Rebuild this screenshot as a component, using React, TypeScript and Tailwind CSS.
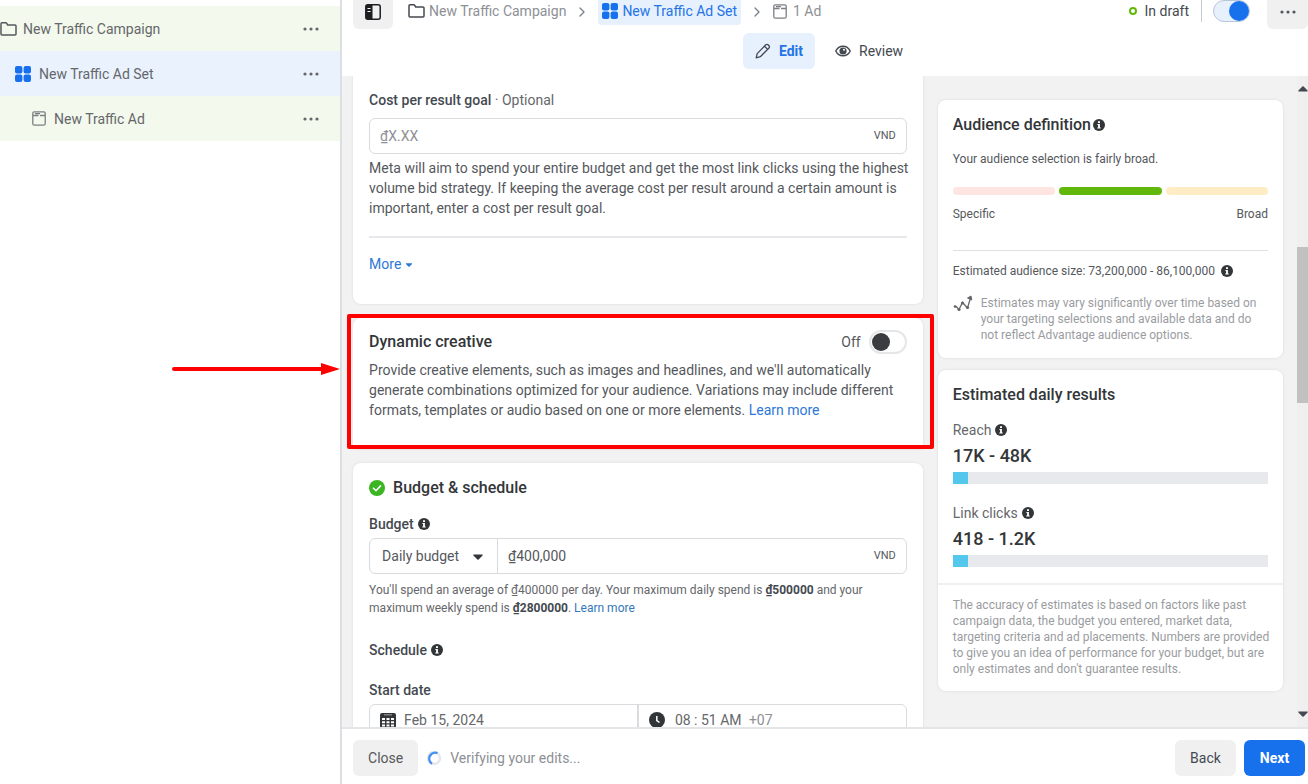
import { useState } from 'react';
import type { ReactNode } from 'react';
import { ChevronRight } from 'lucide-react';

interface IconProps {
  className?: string;
}

function InfoIcon({ className = '' }: IconProps) {
  return (
    <svg viewBox="0 0 12 12" className={`h-3 w-3 shrink-0 ${className}`} aria-hidden="true">
      <circle cx="6" cy="6" r="6" fill="#333638" />
      <path d="M5 2.2h2v1.7H5zM4.4 5h2.5v3.5h.8v1.1H4.3V8.500h.8V6.100h-.7z" fill="#fff" />
    </svg>
  );
}

function FolderIcon({ className = '' }: IconProps) {
  return (
    <svg viewBox="0 0 17 16" className={`h-4 w-[17px] shrink-0 ${className}`} fill="none" stroke="currentColor" strokeWidth="1.5" strokeLinejoin="round" aria-hidden="true">
      <path d="M1 2.8c0-.6.4-1 1-1h3.800c.4 0 .7.200.9.500l1 1.700H15c.6 0 1 .4 1 1V13c0 .6-.4 1-1 1H2c-.6 0-1-.4-1-1z" />
    </svg>
  );
}

function GridIcon() {
  return (
    <svg viewBox="0 0 16 16" className="h-4 w-4 shrink-0" fill="#1771ed" aria-hidden="true">
      <rect x="0" y="0" width="7.400" height="7.400" rx="2" />
      <rect x="8.600" y="0" width="7.400" height="7.400" rx="2" />
      <rect x="0" y="8.600" width="7.400" height="7.400" rx="2" />
      <rect x="8.600" y="8.600" width="7.400" height="7.400" rx="2" />
    </svg>
  );
}

function AdIcon({ className = '' }: IconProps) {
  return (
    <svg viewBox="0 0 14 15" className={`h-[15px] w-3.5 shrink-0 ${className}`} fill="none" stroke="currentColor" strokeWidth="1.3" aria-hidden="true">
      <rect x="0.8" y="0.8" width="12.400" height="13.400" rx="1.500" />
      <path d="M1 4.500h5.500M8 4.500h5M3 2.600h5" />
    </svg>
  );
}

function PanelIcon() {
  return (
    <svg viewBox="0 0 16 16" className="h-4 w-4" aria-hidden="true">
      <rect x="0.8" y="0.8" width="14.400" height="14.400" rx="2" fill="none" stroke="#1c1e21" strokeWidth="1.500" />
      <path d="M1 1h6.500v14H1z" fill="#1c1e21" />
      <path d="M2.500 4.500h3M2.500 7.500h3" stroke="#fff" strokeWidth="1" />
    </svg>
  );
}

function PencilIcon() {
  return (
    <svg viewBox="0 0 16 16" className="h-4 w-4" fill="none" stroke="#444950" strokeWidth="1.300" strokeLinejoin="round" aria-hidden="true">
      <path d="M1.200 14.800l1-4.200 8.600-8.800c.6-.6 1.600-.6 2.200 0l1 1c.6.600.6 1.600 0 2.200l-8.700 8.700zM9.500 3.200l3.200 3.200" />
    </svg>
  );
}

function EyeIcon() {
  return (
    <svg viewBox="0 0 16 12" className="h-3 w-4" aria-hidden="true">
      <path d="M.8 6C2.300 3 4.900 1.200 8 1.200S13.700 3 15.200 6C13.700 9 11.100 10.800 8 10.800S2.300 9 .8 6z" fill="none" stroke="#444950" strokeWidth="1.500" />
      <circle cx="8" cy="6" r="3.600" fill="#444950" />
      <circle cx="9" cy="4.800" r="1" fill="#fff" />
    </svg>
  );
}

function DotsIcon({ className = '' }: IconProps) {
  return (
    <svg viewBox="0 0 16 4" className={`h-1 w-4 ${className}`} fill="currentColor" aria-hidden="true">
      <circle cx="2" cy="2" r="1.600" />
      <circle cx="8" cy="2" r="1.600" />
      <circle cx="14" cy="2" r="1.600" />
    </svg>
  );
}

function CaretIcon({ className = '' }: IconProps) {
  return (
    <svg viewBox="0 0 10 6" className={className} fill="currentColor" aria-hidden="true">
      <path d="M.8.500h8.400c.5 0 .7.500.4.900L5.600 5.500c-.3.400-.9.400-1.200 0L.4 1.400C.1 1 .3.500.8.500z" />
    </svg>
  );
}

function CalendarIcon() {
  return (
    <svg viewBox="0 0 16 16" className="h-4 w-4 shrink-0" fill="#333638" aria-hidden="true">
      <path d="M2 1h12a2 2 0 0 1 2 2v11a2 2 0 0 1-2 2H2a2 2 0 0 1-2-2V3a2 2 0 0 1 2-2z" />
      <path d="M2 6h3v2H2zM6.500 6h3v2h-3zM11 6h3v2h-3zM2 9.200h3v2H2zM6.500 9.200h3v2h-3zM11 9.200h3v2h-3zM2 12.500h3v2H2zM6.500 12.500h3v2h-3zM11 12.500h3v2h-3z" fill="#fff" />
      <path d="M4 2.800h8" stroke="#a0a2a4" />
    </svg>
  );
}

function ClockIcon() {
  return (
    <svg viewBox="0 0 16 16" className="h-4 w-4 shrink-0" aria-hidden="true">
      <circle cx="8" cy="8" r="8" fill="#333638" />
      <path d="M7.800 4v4.500l2.700 2" fill="none" stroke="#fff" strokeWidth="1.500" />
    </svg>
  );
}

function TrendIcon() {
  return (
    <svg viewBox="0 0 20 17" className="h-[17px] w-5 shrink-0" fill="none" stroke="#65676b" aria-hidden="true">
      <path d="M1 11.500h2l3 3 3.500-7 5 5.500L17.500 3" strokeWidth="1.300" />
      <path d="M14.500 3l3.500-2 .8 4z" fill="#65676b" />
      <g fill="#65676b" stroke="none">
        <circle cx="2" cy="11.500" r="1.300" />
        <circle cx="6" cy="14.500" r="1.600" />
        <circle cx="9.500" cy="8" r="1.600" />
        <circle cx="14.500" cy="12.500" r="1.600" />
      </g>
    </svg>
  );
}

const treeItems = [
  { name: 'New Traffic Campaign', icon: <FolderIcon className="text-[#55585c]" />, row: 'bg-[#f3f9ec] gap-1.5' },
  { name: 'New Traffic Ad Set', icon: <GridIcon />, row: 'bg-[#eaf2fe] pl-[15px] gap-2' },
  { name: 'New Traffic Ad', icon: <AdIcon className="text-[#7c7f83]" />, row: 'bg-[#f3f9ec] pl-8 gap-2' },
];

const estimates = [
  { label: 'Reach', value: '17K - 48K', percent: 5 },
  { label: 'Link clicks', value: '418 - 1.2K', percent: 5 },
];

function Sidebar() {
  return (
    <aside className="relative w-[26%] shrink-0 bg-white pt-1.5">
      <ul>
        {treeItems.map((item) => (
          <li key={item.name} className={`flex h-[45px] items-center pr-[21px] ${item.row}`}>
            {item.icon}
            <span className="flex-1 text-sm text-[#65676b]">{item.name}</span>
            <button type="button" aria-label={`Options for ${item.name}`} className="text-[#65676b]">
              <DotsIcon />
            </button>
          </li>
        ))}
      </ul>
      {/* callout arrow */}
      <svg viewBox="0 0 168 12" className="absolute top-[363px] right-0 h-3 w-[168px]" aria-hidden="true">
        <path d="M2 6h148" stroke="#fe0000" strokeWidth="4" strokeLinecap="round" />
        <path d="M149 0l19 6-19 6z" fill="#fe0000" />
      </svg>
    </aside>
  );
}

function Header() {
  const [active, setActive] = useState(true);

  return (
    <header className="h-[76px] shrink-0 bg-white">
      <div className="flex h-[29px] items-start pl-[11px]">
        <button type="button" aria-label="Toggle panel" className="flex h-[29px] w-10 justify-center rounded-b-md bg-[#f0f0f0] pt-1">
          <PanelIcon />
        </button>
        <nav className="flex items-start text-sm text-[#8d9095]">
          <a href="#campaign" className="ml-[15px] flex h-[22px] items-center gap-1">
            <FolderIcon className="text-[#444950]" />
            New Traffic Campaign
          </a>
          <ChevronRight className="mx-2 mt-1 h-4 w-4 text-[#7c828a]" />
          <a href="#adset" className="flex h-[25px] items-center gap-1 rounded-b-sm bg-[#e7f0fd] px-1 pb-[3px] text-[#2374e8]">
            <GridIcon />
            New Traffic Ad Set
          </a>
          <ChevronRight className="mx-2 mt-1 h-4 w-4 text-[#7c828a]" />
          <a href="#ad" className="flex h-[22px] items-center gap-1.5">
            <AdIcon className="text-[#7c7f83]" />
            1 Ad
          </a>
        </nav>
        <div className="ml-auto flex items-start">
          <span className="flex h-[22px] items-center gap-2 border-r border-[#c8cacd] pr-3 text-sm text-[#444950]">
            <span className="h-2 w-2 rounded-full border-2 border-[#62b80a]" />
            In draft
          </span>
          <input
            type="checkbox"
            aria-label="Ad set status"
            checked={active}
            onChange={(e) => setActive(e.target.checked)}
            className="ml-[11px] h-[22px] w-[37px] appearance-none rounded-full border border-[#b9c6d8] bg-[#e7f0fd] before:block before:h-5 before:w-5 before:rounded-full before:bg-[#1771ed] checked:before:ml-[15px]"
          />
          <button type="button" aria-label="More options" className="ml-[17px] flex h-[29px] w-[41px] justify-center rounded-b-md bg-[#f0f0f0] pt-2.5 text-[#55585c]">
            <DotsIcon className="w-3.5" />
          </button>
        </div>
      </div>
      <div className="mt-1 flex justify-center gap-2 pl-2">
        <button type="button" className="flex h-9 items-center gap-2 rounded-md bg-[#e7f0fd] px-3 text-sm font-bold text-[#2374e8]">
          <PencilIcon />
          Edit
        </button>
        <button type="button" className="flex h-9 items-center gap-2 px-3 text-sm text-[#444950]">
          <EyeIcon />
          Review
        </button>
      </div>
    </header>
  );
}

function Card({ className = '', children }: { className?: string; children: ReactNode }) {
  return <section className={`bg-white shadow-[0_0_3px_rgba(0,0,0,0.1)] ${className}`}>{children}</section>;
}

function CostGoalCard() {
  return (
    <Card className="rounded-b-lg px-4 pt-3.5 pb-[30px]">
      <label htmlFor="cost-goal" className="block text-sm leading-5 font-medium text-[#444950]">
        Cost per result goal <span className="font-normal text-[#65676b]">· Optional</span>
      </label>
      <div className="mt-2 flex h-9 items-center rounded-md border border-[#d9dbde] px-2.5">
        <input id="cost-goal" placeholder="₫X.XX" className="min-w-0 flex-1 text-sm outline-none placeholder:text-[#8d9095]" />
        <span className="text-[11px] text-[#55585c]">VND</span>
      </div>
      <p className="-mr-3 mt-1 text-sm leading-5 text-[#55585c]">
        Meta will aim to spend your entire budget and get the most link clicks using the highest volume bid strategy. If
        keeping the average cost per result around a certain amount is important, enter a cost per result goal.
      </p>
      <hr className="mt-[18px] border-t-2 border-[#e6e8eb]" />
      <button type="button" className="mt-4 flex items-center gap-1 text-sm leading-5 text-[#2d78d6]">
        More
        <CaretIcon className="mt-0.5 h-1 w-2" />
      </button>
    </Card>
  );
}

function DynamicCreativeCard() {
  const [enabled, setEnabled] = useState(false);

  return (
    <div className="relative">
      <Card className="rounded-t-lg px-4 pt-3.5 pb-[29px]">
        <div className="flex h-5 items-center">
          <h2 className="flex-1 text-base leading-5 font-medium text-[#333638]">Dynamic creative</h2>
          <label htmlFor="dynamic-creative" className="text-sm text-[#55585c]">
            {enabled ? 'On' : 'Off'}
          </label>
          <input
            id="dynamic-creative"
            type="checkbox"
            checked={enabled}
            onChange={(e) => setEnabled(e.target.checked)}
            className="ml-2 h-6 w-[38px] appearance-none rounded-full border-2 border-[#e4e6e8] bg-white p-px before:block before:h-[18px] before:w-[18px] before:rounded-full before:bg-[#3a3c3f] checked:before:ml-3.5"
          />
        </div>
        <p className="mt-2 text-sm leading-5 text-[#55585c]">
          Provide creative elements, such as images and headlines, and we'll automatically generate combinations optimized
          for your audience. Variations may include different formats, templates or audio based on one or more elements.{' '}
          <a href="#dynamic-help" className="text-[#2d78d6]">Learn more</a>
        </p>
      </Card>
      {/* highlight frame */}
      <div className="pointer-events-none absolute -top-1 -right-[11px] bottom-0 -left-1.5 rounded-xs border-4 border-[#fe0000]" />
    </div>
  );
}

function BudgetCard() {
  return (
    <Card className="rounded-t-lg px-4 pt-[15px] pb-4">
      <h2 className="flex items-center gap-2 text-base leading-5 font-medium text-[#333638]">
        <svg viewBox="0 0 16 16" className="h-4 w-4" aria-hidden="true">
          <circle cx="8" cy="8" r="8" fill="#3cb523" />
          <path d="M4.500 8.200l2.500 2.500 4.500-4.800" fill="none" stroke="#fff" strokeWidth="1.600" strokeLinecap="round" />
        </svg>
        Budget &amp; schedule
      </h2>
      <label htmlFor="budget-amount" className="mt-4 flex items-center gap-1 text-sm leading-5 font-medium text-[#444950]">
        Budget
        <InfoIcon />
      </label>
      <div className="mt-1 flex h-9 items-center rounded-md border border-[#d9dbde]">
        <div className="relative h-full w-32 shrink-0 border-r border-[#d9dbde]">
          <select aria-label="Budget type" className="h-full w-full appearance-none pl-3 text-sm text-[#55585c] outline-none">
            <option>Daily budget</option>
            <option>Lifetime budget</option>
          </select>
          <CaretIcon className="pointer-events-none absolute top-[15px] right-3.5 h-1.5 w-2.5 text-[#333638]" />
        </div>
        <input id="budget-amount" defaultValue="₫400,000" className="min-w-0 flex-1 pl-2.5 text-sm text-[#55585c] outline-none" />
        <span className="mr-2.5 text-[11px] text-[#55585c]">VND</span>
      </div>
      <p className="mt-[7px] text-xs leading-[18px] text-[#65676b]">
        You'll spend an average of ₫400000 per day. Your maximum daily spend is{' '}
        <b className="text-[#444950]">₫500000</b> and your maximum weekly spend is{' '}
        <b className="text-[#444950]">₫2800000</b>.{' '}
        <a href="#budget-help" className="text-[#3578b8]">Learn more</a>
      </p>
      <h3 className="mt-[23px] flex items-center gap-1 text-sm leading-5 font-medium text-[#444950]">
        Schedule
        <InfoIcon />
      </h3>
      <label htmlFor="start-date" className="mt-5 block text-sm leading-5 font-medium text-[#444950]">
        Start date
      </label>
      <div className="mt-1 flex h-8 rounded-md border border-[#d9dbde] text-sm text-[#65676b]">
        <div className="flex flex-1 items-center gap-2 border-r-2 border-[#d9dbde] pl-2.5">
          <CalendarIcon />
          <input id="start-date" defaultValue="Feb 15, 2024" className="min-w-0 flex-1 outline-none" />
        </div>
        <div className="flex flex-1 items-center pl-2.5">
          <ClockIcon />
          <input aria-label="Start time" defaultValue="08 : 51 AM" className="ml-2.5 w-[70px] outline-none" />
          <span className="ml-1 text-[#8d9095]">+07</span>
        </div>
      </div>
    </Card>
  );
}

function AudienceCard() {
  return (
    <Card className="rounded-lg px-[15px] pt-[15px] pb-[15px] text-xs leading-4 text-[#55585c]">
      <h2 className="flex items-center gap-0.5 text-base leading-5 font-medium text-[#333638]">
        Audience definition
        <InfoIcon />
      </h2>
      <p className="mt-4">Your audience selection is fairly broad.</p>
      <div className="mt-5 grid grid-cols-3 gap-1">
        <div className="h-2 rounded-full bg-[#ffe5e1]" />
        <div className="h-2 rounded-full bg-[#62b80a]" />
        <div className="h-2 rounded-full bg-[#feecc4]" />
      </div>
      <div className="mt-[11px] flex justify-between">
        <span>Specific</span>
        <span>Broad</span>
      </div>
      <hr className="mt-7 border-[#dfe0e2]" />
      <p className="mt-3 flex items-center gap-1.5">
        Estimated audience size: 73,200,000 - 86,100,000
        <InfoIcon />
      </p>
      <div className="mt-4 flex gap-2 pr-2">
        <TrendIcon />
        <p className="text-[#9a9c9f]">
          Estimates may vary significantly over time based on your targeting selections and available data and do not
          reflect Advantage audience options.
        </p>
      </div>
    </Card>
  );
}

function EstimatesCard() {
  return (
    <Card className="rounded-lg pt-[15px] pb-3.5">
      <div className="px-[15px] pb-3">
        <h2 className="text-base leading-5 font-medium text-[#333638]">Estimated daily results</h2>
        {estimates.map((item) => (
          <div key={item.label} className="mb-1 pt-[15px] text-[#333638]">
            <div className="flex items-center gap-1 text-sm leading-5 text-[#65676b]">
              {item.label}
              <InfoIcon />
            </div>
            <div className="mt-1.5 text-lg leading-5 font-medium">{item.value}</div>
            <div className="mt-1.5 h-3 bg-[#e7e9ec]">
              <div className="h-full bg-[#54c7ec]" style={{ width: `${item.percent}%` }} />
            </div>
          </div>
        ))}
      </div>
      <p className="border-t-2 border-[#eff0f1] pt-3 pr-2 pl-[15px] text-xs leading-4 text-[#9a9c9f]">
        The accuracy of estimates is based on factors like past campaign data, the budget you entered, market data,
        targeting criteria and ad placements. Numbers are provided to give you an idea of performance for your budget, but
        are only estimates and don't guarantee results.
      </p>
    </Card>
  );
}

function Scrollbar() {
  return (
    <div className="flex w-[11px] shrink-0 flex-col items-center overflow-hidden bg-[#efefef] py-2.5 text-[#444950]">
      <CaretIcon className="h-1.5 w-2.5 shrink-0 rotate-180" />
      <div className="flex w-full flex-1 flex-col">
        <div className="grow-[155]" />
        <div className="w-full grow-[155] bg-[#c1c1c1]" />
        <div className="grow-[308]" />
      </div>
      <CaretIcon className="h-1.5 w-2.5 shrink-0" />
    </div>
  );
}

function Footer() {
  return (
    <footer className="flex h-[57px] shrink-0 items-center border-t-2 border-[#e4e5e8] bg-white pt-0.5 pr-[3px] pl-[11px] text-sm">
      <button type="button" className="h-9 rounded-md bg-[#f0f0f0] px-[15px] text-[#55585c]">
        Close
      </button>
      <svg viewBox="0 0 16 16" className="ml-2 h-4 w-4" fill="none" strokeWidth="2.400" aria-hidden="true">
        <circle cx="8" cy="8" r="6" stroke="#e4e6e9" />
        <path d="M6 13.700A6 6 0 0 1 11.500 3.100" stroke="#4a90f2" />
      </svg>
      <span className="ml-2 text-[#8d9095]">Verifying your edits...</span>
      <button type="button" className="ml-auto h-9 w-[61px] rounded-md bg-[#f0f0f0] text-[#444950]">
        Back
      </button>
      <button type="button" className="ml-2 h-9 w-[61px] rounded-md bg-[#1771ed] font-bold text-white">
        Next
      </button>
    </footer>
  );
}

export default function App() {
  return (
    <div className="flex h-screen overflow-hidden bg-white font-['Roboto','Liberation_Sans',sans-serif]">
      <Sidebar />
      <main className="flex min-w-0 flex-1 flex-col border-l-2 border-[#dcdee1]">
        <Header />
        <div className="flex min-h-0 flex-1 overflow-hidden bg-[#f2f2f2]">
          <div className="grid flex-1 grid-cols-[minmax(0,1.65fr)_minmax(0,1fr)] items-start gap-[15px] pr-3.5 pl-[11px]">
            <div className="flex flex-col gap-3.5">
              <CostGoalCard />
              <DynamicCreativeCard />
              <BudgetCard />
            </div>
            <div className="flex flex-col gap-3 pt-6">
              <AudienceCard />
              <EstimatesCard />
            </div>
          </div>
          <Scrollbar />
        </div>
        <Footer />
      </main>
    </div>
  );
}
